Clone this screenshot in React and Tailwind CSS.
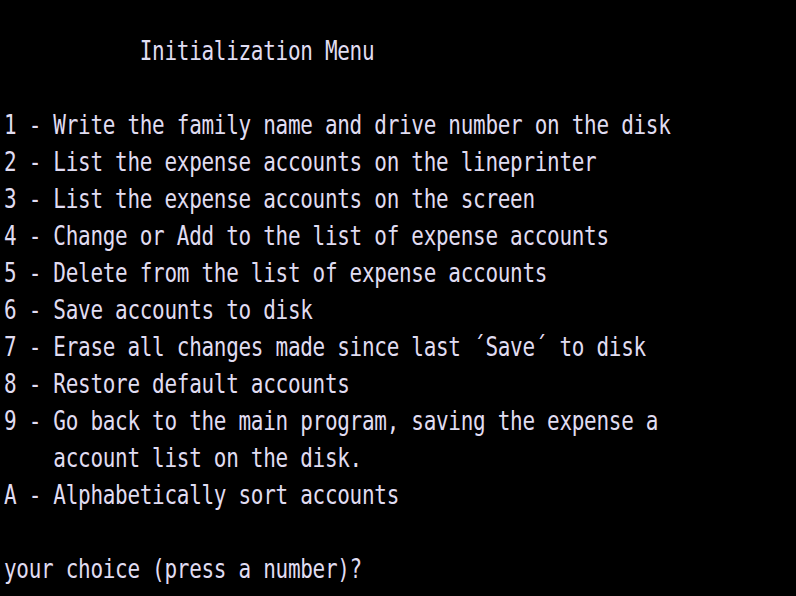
import React from "react";

const lines = [
  "           Initialization Menu",
  "",
  "1 - Write the family name and drive number on the disk",
  "2 - List the expense accounts on the lineprinter",
  "3 - List the expense accounts on the screen",
  "4 - Change or Add to the list of expense accounts",
  "5 - Delete from the list of expense accounts",
  "6 - Save accounts to disk",
  "7 - Erase all changes made since last \u00b4Save\u00b4 to disk",
  "8 - Restore default accounts",
  "9 - Go back to the main program, saving the expense a",
  "    account list on the disk.",
  "A - Alphabetically sort accounts",
  "",
  "your choice (press a number)?",
];

const App = () => {
  return (
    <div className="w-[796px] h-[596px] overflow-hidden bg-black pt-[33px] pl-[4px] text-[#e0ddf2] font-['DejaVu_Sans_Mono',monospace] text-[21px] tracking-[-0.3px]">
      {lines.map((line, i) => (
        <div key={i} className="h-[37px] leading-[37px] whitespace-pre">
          <span className="inline-block scale-y-[1.3]">{line || " "}</span>
        </div>
      ))}
    </div>
  );
};

export default App;
